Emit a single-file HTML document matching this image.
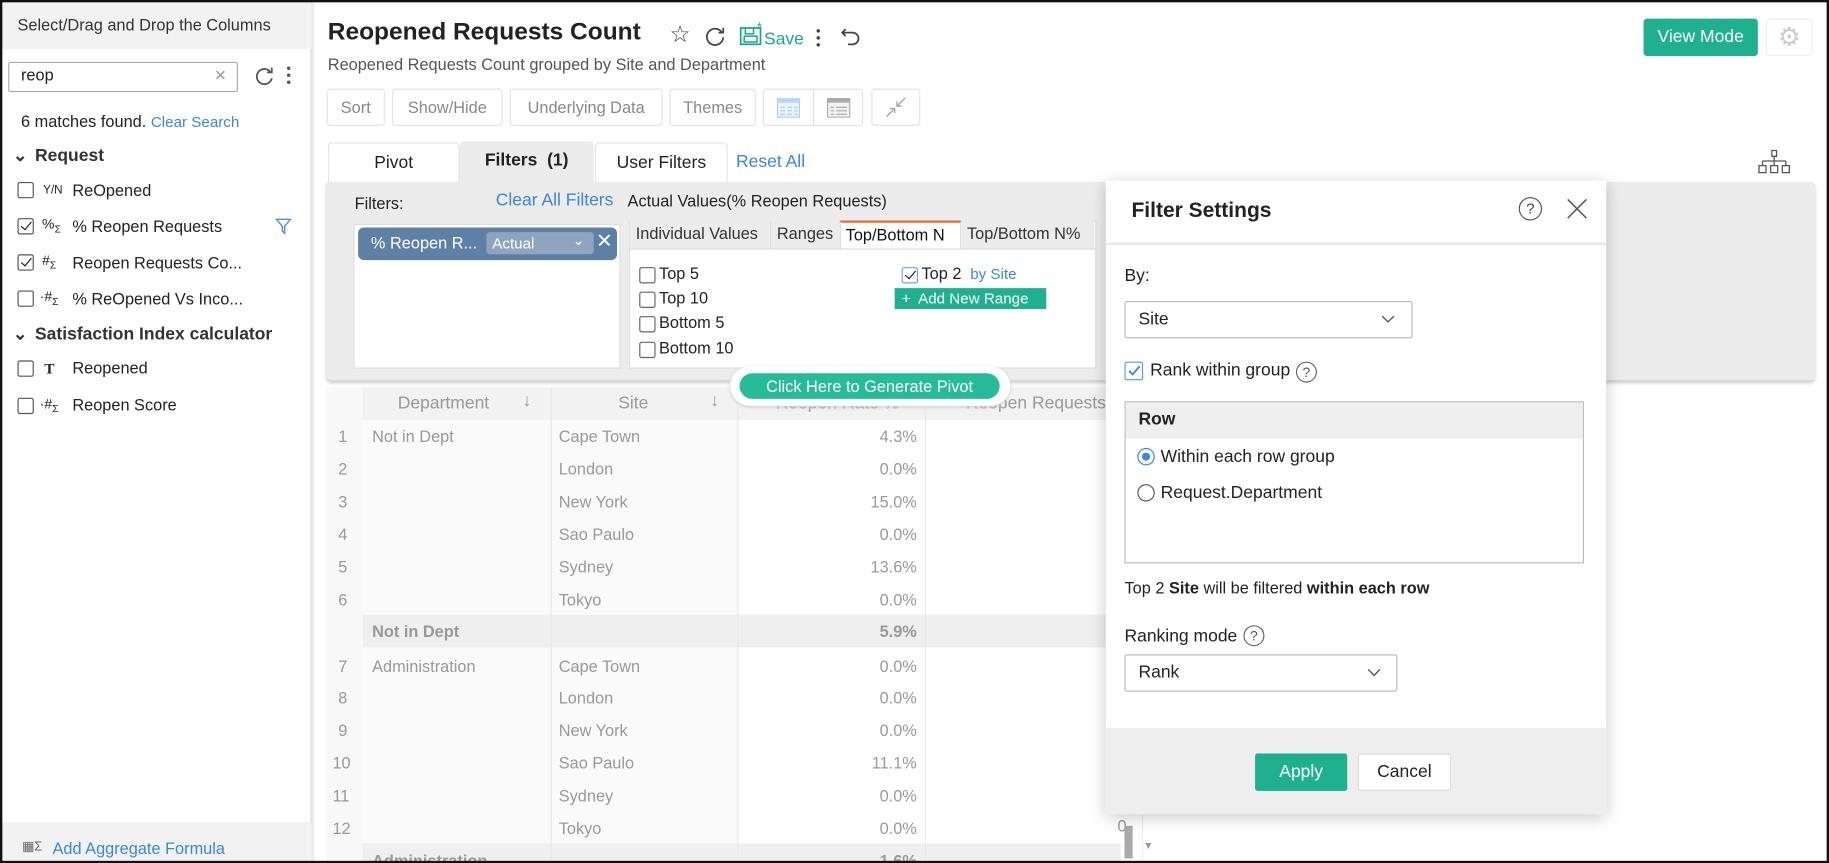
<!DOCTYPE html>
<html><head><meta charset="utf-8"><style>
*{box-sizing:border-box;margin:0;padding:0}
html,body{width:1829px;height:863px;overflow:hidden;background:#fff}
#w{position:absolute;left:0;top:0;width:1568px;height:740px;transform:scale(1.16645);transform-origin:0 0;font-family:"Liberation Sans",sans-serif;font-size:14px;color:#222;overflow:hidden}
.a{position:absolute}
.blue{color:#3a86e0}
.cb{position:absolute;width:14px;height:14px;border:1px solid #555;border-radius:2px;background:#fff}
.cb.on::after{content:"";position:absolute;left:4px;top:0px;width:4px;height:8px;border:solid #222;border-width:0 1.5px 1.5px 0;transform:rotate(40deg)}
.btn{position:absolute;top:76px;height:32px;border:1px solid #e3e3e3;border-radius:3px;color:#888;font-size:14px;line-height:30px;text-align:center}
.row{position:absolute;left:0;width:680px;height:28px;font-size:14px;color:#999;line-height:28px}
.row span{position:absolute}
.fld{font-size:14px}
</style></head><body><div id="w">
<!-- left panel -->
<div class="a" style="left:0;top:0;width:267px;height:740px;background:#fff;border-right:1px solid #ddd;box-shadow:2px 0 3px #e4e4e4"></div>
<div class="a" style="left:0;top:0;width:267px;height:42px;background:#f2f2f2"></div>
<div class="a" style="left:15px;top:13px;font-size:14px;color:#333">Select/Drag and Drop the Columns</div>
<div class="a" style="left:7px;top:53px;width:197px;height:26px;border:1px solid #aaa;border-radius:2px"></div>
<div class="a" style="left:18px;top:56px;font-size:14px">reop</div>
<div class="a" style="left:184px;top:55px;font-size:17px;color:#999">×</div>
<svg class="a" style="left:218px;top:57px" width="18" height="18" viewBox="0 0 18 18"><path d="M14 5A6.5 6.5 0 1 0 15 10" fill="none" stroke="#555" stroke-width="1.5"/><path d="M11 5h4V1" fill="none" stroke="#555" stroke-width="1.5"/></svg>
<div class="a" style="left:246px;top:57px;width:3px;height:3px;background:#555;border-radius:2px;box-shadow:0 6px #555,0 12px #555"></div>
<div class="a" style="left:18px;top:96px;font-size:14px">6 matches found. <span class="blue" style="font-size:13px">Clear Search</span></div>
<div class="a" style="left:11px;top:124px;font-size:15px;font-weight:bold;color:#333">⌄</div>
<div class="a" style="left:30px;top:125px;font-size:15px;font-weight:bold;color:#333">Request</div>
<div class="cb" style="left:15px;top:156px"></div><div class="a" style="left:37px;top:158px;font-size:10px">Y/N</div><div class="a fld" style="left:62px;top:155px">ReOpened</div>
<div class="cb on" style="left:15px;top:187px"></div><div class="a" style="left:36px;top:185px;font-size:12px">%<sub style="font-size:9px">Σ</sub></div><div class="a fld" style="left:62px;top:186px">% Reopen Requests</div>
<svg class="a" style="left:236px;top:187px" width="14" height="14" viewBox="0 0 14 14"><path d="M1 1h12L8 7v6L6 11V7Z" fill="none" stroke="#4a8fe0" stroke-width="1.2"/></svg>
<div class="cb on" style="left:15px;top:218px"></div><div class="a" style="left:36px;top:216px;font-size:12px">#<sub style="font-size:9px">Σ</sub></div><div class="a fld" style="left:62px;top:217px">Reopen Requests Co...</div>
<div class="cb" style="left:15px;top:249px"></div><div class="a" style="left:34px;top:247px;font-size:12px">·#<sub style="font-size:9px">Σ</sub></div><div class="a fld" style="left:62px;top:248px">% ReOpened Vs Inco...</div>
<div class="a" style="left:11px;top:277px;font-size:15px;font-weight:bold;color:#333">⌄</div>
<div class="a" style="left:30px;top:278px;font-size:15px;font-weight:bold;color:#333">Satisfaction Index calculator</div>
<div class="cb" style="left:15px;top:309px"></div><div class="a" style="left:38px;top:308px;font-size:13px;font-weight:bold;font-family:'Liberation Serif',serif">T</div><div class="a fld" style="left:62px;top:307px">Reopened</div>
<div class="cb" style="left:15px;top:341px"></div><div class="a" style="left:34px;top:339px;font-size:12px">·#<sub style="font-size:9px">Σ</sub></div><div class="a fld" style="left:62px;top:339px">Reopen Score</div>
<div class="a" style="left:0;top:705px;width:267px;height:35px;background:#f2f2f2"></div>
<div class="a" style="left:19px;top:719px;font-size:11px;color:#666">▦Σ</div>
<div class="a blue" style="left:45px;top:719px;font-size:14px">Add Aggregate Formula</div>

<!-- header -->
<div class="a" style="left:281px;top:16px;font-size:21px;font-weight:bold;color:#222">Reopened Requests Count</div>
<div class="a" style="left:574px;top:17px;font-size:20px;color:#444">☆</div>
<svg class="a" style="left:604px;top:22px" width="18" height="18" viewBox="0 0 18 18"><path d="M15 6A7 7 0 1 0 16 10" fill="none" stroke="#444" stroke-width="1.5"/><path d="M12 6h4V2" fill="none" stroke="#444" stroke-width="1.5"/></svg>
<svg class="a" style="left:634px;top:18px" width="22" height="22" viewBox="0 0 22 22"><rect x="1" y="6" width="17" height="14" fill="none" stroke="#1aa88a" stroke-width="1.5"/><rect x="4" y="13" width="11" height="5" fill="none" stroke="#1aa88a" stroke-width="1.3"/><path d="M5 6v5h7V6" fill="none" stroke="#1aa88a" stroke-width="1.3"/><text x="15" y="9" font-size="11" fill="#1aa88a" font-family="Liberation Sans">*</text></svg>
<div class="a" style="left:655px;top:25px;font-size:15px;color:#1aa88a">Save</div>
<div class="a" style="left:700px;top:25px;width:3px;height:3px;background:#444;border-radius:2px;box-shadow:0 6px #444,0 12px #444"></div>
<svg class="a" style="left:721px;top:22px" width="18" height="18" viewBox="0 0 18 18"><path d="M4 3L1 6l3 3M1 6h9a5 5 0 0 1 0 10H6" fill="none" stroke="#444" stroke-width="1.5"/></svg>
<div class="a" style="left:281px;top:47px;font-size:14px;color:#555">Reopened Requests Count grouped by Site and Department</div>
<div class="btn" style="left:280px;width:50px">Sort</div>
<div class="btn" style="left:336px;width:95px">Show/Hide</div>
<div class="btn" style="left:437px;width:131px">Underlying Data</div>
<div class="btn" style="left:574px;width:74px">Themes</div>
<div class="btn" style="left:654px;width:86px"></div>
<div class="a" style="left:697px;top:77px;width:1px;height:30px;background:#e3e3e3"></div>
<svg class="a" style="left:666px;top:84px" width="20" height="17"><rect x="0.5" y="0.5" width="19" height="16" fill="#eaf3fb" stroke="#a9cdee"/><rect x="0" y="0" width="20" height="4" fill="#b7d7f2"/><path d="M3 8h4M9 8h4M15 8h3M3 11h4M9 11h4M15 11h3M3 14h4M9 14h4M15 14h3" stroke="#a9cdee"/></svg>
<svg class="a" style="left:709px;top:84px" width="20" height="17"><rect x="0.5" y="0.5" width="19" height="16" fill="#f3f3f3" stroke="#aaa"/><rect x="0" y="0" width="20" height="4" fill="#aaa"/><path d="M3 8h3M8 8h9M3 11h3M8 11h9M3 14h3M8 14h9" stroke="#aaa"/></svg>
<div class="btn" style="left:747px;width:42px"></div>
<svg class="a" style="left:758px;top:82px" width="20" height="20"><path d="M2 18L9 11M5 11h4v4M18 2l-7 7M11 5v4h4" fill="none" stroke="#aaa" stroke-width="1.3"/></svg>
<div class="a" style="left:1409px;top:16px;width:98px;height:32px;background:#1fb08f;border-radius:3px;color:#fff;font-size:15px;line-height:32px;text-align:center">View Mode</div>
<div class="a" style="left:1514px;top:16px;width:40px;height:32px;border:1px solid #eee;border-radius:3px;color:#ccc;font-size:22px;line-height:30px;text-align:center">⚙</div>

<!-- tabs -->
<div class="a" style="left:281px;top:122px;width:113px;height:36px;border:1px solid #e2e2e2;border-bottom:none;border-radius:4px 4px 0 0;background:#fff;text-align:center;line-height:34px;font-size:15px">Pivot</div>
<div class="a" style="left:394px;top:121px;width:115px;height:37px;background:#ececec;border-radius:4px 4px 0 0;text-align:center;line-height:34px;font-size:15px;font-weight:bold">Filters&nbsp; (1)</div>
<div class="a" style="left:510px;top:122px;width:114px;height:36px;border:1px solid #e2e2e2;border-bottom:none;border-radius:4px 4px 0 0;background:#fff;text-align:center;line-height:34px;font-size:15px">User Filters</div>
<div class="a blue" style="left:631px;top:130px;font-size:15px">Reset All</div>
<svg class="a" style="left:1506px;top:128px" width="30" height="22"><path d="M13 1h4v5h-4zM15 6v4M5 10h20M5 10v4M15 10v4M25 10v4M2 14h6v6H2zM12 14h6v6h-6zM22 14h6v6h-6z" fill="none" stroke="#555" stroke-width="1.1"/></svg>

<!-- filter panel -->
<div class="a" style="left:280px;top:156px;width:1276px;height:170px;background:#ececec;border-radius:0 4px 4px 4px;box-shadow:0 2px 3px #ccc"></div>
<div class="a" style="left:304px;top:166px;font-size:14px">Filters:</div>
<div class="a blue" style="left:425px;top:163px;font-size:15px">Clear All Filters</div>
<div class="a" style="left:538px;top:164px;font-size:14px">Actual Values(% Reopen Requests)</div>
<div class="a" style="left:303px;top:192px;width:229px;height:124px;background:#fff;border:1px solid #ddd"></div>
<div class="a" style="left:307px;top:195px;width:222px;height:28px;background:#5f80a5;border-radius:5px"></div>
<div class="a" style="left:318px;top:200px;color:#fff;font-size:14px">% Reopen R...</div>
<div class="a" style="left:417px;top:199px;width:92px;height:19px;background:#8fa4bf;border-radius:3px;color:#fff;font-size:13px;line-height:19px;padding-left:5px">Actual<span style="position:absolute;right:8px;top:-2px;font-size:12px">⌄</span></div>
<div class="a" style="left:511px;top:197px;color:#fff;font-size:17px">✕</div>
<div class="a" style="left:539px;top:189px;width:401px;height:127px;background:#fff;border:1px solid #ddd"></div>
<div class="a" style="left:540px;top:189px;width:398px;height:24px;background:#ececec"></div>
<div class="a" style="left:545px;top:192px;font-size:14px;color:#333">Individual Values</div>
<div class="a" style="left:660px;top:190px;width:1px;height:23px;background:#ddd"></div>
<div class="a" style="left:666px;top:192px;font-size:14px;color:#333">Ranges</div>
<div class="a" style="left:720px;top:189px;width:104px;height:25px;background:#fff;border-top:2px solid #e5703a;border-left:1px solid #ddd;border-right:1px solid #ddd"></div>
<div class="a" style="left:725px;top:193px;font-size:14px;color:#111">Top/Bottom N</div>
<div class="a" style="left:829px;top:192px;font-size:14px;color:#333">Top/Bottom N%</div>
<div class="a" style="left:540px;top:213px;width:399px;height:1px;background:#ddd"></div>
<div class="cb" style="left:548px;top:229px;border-color:#666"></div><div class="a" style="left:565px;top:226px;font-size:14px">Top 5</div>
<div class="cb" style="left:548px;top:250px;border-color:#666"></div><div class="a" style="left:565px;top:247px;font-size:14px">Top 10</div>
<div class="cb" style="left:548px;top:271px;border-color:#666"></div><div class="a" style="left:565px;top:268px;font-size:14px">Bottom 5</div>
<div class="cb" style="left:548px;top:293px;border-color:#666"></div><div class="a" style="left:565px;top:290px;font-size:14px">Bottom 10</div>
<div class="cb on" style="left:773px;top:229px;border-color:#6ea7e8"></div><div class="a" style="left:790px;top:226px;font-size:14px">Top 2 <span class="blue" style="font-size:13px">&nbsp;by Site</span></div>
<div class="a" style="left:767px;top:247px;width:130px;height:18px;background:#1fb08f;color:#fff;font-size:13px;line-height:18px;padding-left:6px">+&nbsp; Add New Range</div>

<!-- table -->
<div class="a" style="left:280px;top:332px;width:700px;height:410px;background:#fff;border:1px solid #eee"></div>
<div class="a" style="left:311px;top:332px;width:650px;height:28px;background:#f2f2f2"></div>
<div class="a" style="left:280px;top:332px;width:31px;height:410px;background:#f8f8f8"></div>
<div class="a" style="left:311px;top:360px;width:321px;height:380px;background:#fafafa"></div>
<div class="a" style="left:311px;top:527px;width:650px;height:28px;background:#efefef"></div>
<div class="a" style="left:311px;top:723px;width:650px;height:28px;background:#efefef"></div>
<div class="a" style="left:472px;top:332px;width:1px;height:410px;background:#e8e8e8"></div>
<div class="a" style="left:632px;top:332px;width:1px;height:410px;background:#e8e8e8"></div>
<div class="a" style="left:793px;top:332px;width:1px;height:410px;background:#e8e8e8"></div>
<div class="a" style="left:341px;top:337px;font-size:15px;color:#999">Department</div><div class="a" style="left:448px;top:335px;font-size:15px;color:#999">↓</div>
<div class="a" style="left:530px;top:337px;font-size:15px;color:#999">Site</div><div class="a" style="left:609px;top:335px;font-size:15px;color:#999">↓</div>
<div class="a" style="left:665px;top:337px;font-size:15px;color:#999">Reopen Rate %</div>
<div class="a" style="left:828px;top:337px;font-size:15px;color:#999">Reopen Requests</div>
<div style="position:absolute;left:280px;top:360px">
<div class="row" style="top:0"><span style="left:10px">1</span><span style="left:39px">Not in Dept</span><span style="left:199px">Cape Town</span><span style="right:174px">4.3%</span></div>
<div class="row" style="top:28px"><span style="left:10px">2</span><span style="left:199px">London</span><span style="right:174px">0.0%</span></div>
<div class="row" style="top:56px"><span style="left:10px">3</span><span style="left:199px">New York</span><span style="right:174px">15.0%</span></div>
<div class="row" style="top:84px"><span style="left:10px">4</span><span style="left:199px">Sao Paulo</span><span style="right:174px">0.0%</span></div>
<div class="row" style="top:112px"><span style="left:10px">5</span><span style="left:199px">Sydney</span><span style="right:174px">13.6%</span></div>
<div class="row" style="top:140px"><span style="left:10px">6</span><span style="left:199px">Tokyo</span><span style="right:174px">0.0%</span></div>
<div class="row" style="top:167px;font-weight:bold"><span style="left:39px">Not in Dept</span><span style="right:174px">5.9%</span></div>
<div class="row" style="top:197px"><span style="left:10px">7</span><span style="left:39px">Administration</span><span style="left:199px">Cape Town</span><span style="right:174px">0.0%</span></div>
<div class="row" style="top:224px"><span style="left:10px">8</span><span style="left:199px">London</span><span style="right:174px">0.0%</span></div>
<div class="row" style="top:252px"><span style="left:10px">9</span><span style="left:199px">New York</span><span style="right:174px">0.0%</span></div>
<div class="row" style="top:280px"><span style="left:5px">10</span><span style="left:199px">Sao Paulo</span><span style="right:174px">11.1%</span></div>
<div class="row" style="top:308px"><span style="left:5px">11</span><span style="left:199px">Sydney</span><span style="right:174px">0.0%</span></div>
<div class="row" style="top:336px"><span style="left:5px">12</span><span style="left:199px">Tokyo</span><span style="right:174px">0.0%</span></div>
<div class="row" style="top:364px;font-weight:bold"><span style="left:39px">Administration</span><span style="right:174px">1.6%</span></div>
</div>
<div class="a" style="left:958px;top:700px;font-size:14px;color:#999">0</div>
<div class="a" style="left:964px;top:708px;width:7px;height:28px;background:#aaa"></div>
<div class="a" style="left:980px;top:720px;font-size:9px;color:#999">▼</div>

<!-- generate pivot -->
<div class="a" style="left:626px;top:314px;width:240px;height:34px;background:#fff;border-radius:17px;box-shadow:0 1px 3px #ccc"></div>
<div class="a" style="left:634px;top:320px;width:223px;height:22px;background:#26bc99;border-radius:11px;color:#fff;font-size:14px;line-height:22px;text-align:center">Click Here to Generate Pivot</div>

<!-- dialog -->
<div class="a" style="left:948px;top:155px;width:429px;height:543px;background:#fff;box-shadow:0 3px 14px rgba(0,0,0,.22)"></div>
<div class="a" style="left:970px;top:170px;font-size:18px;font-weight:bold">Filter Settings</div>
<div class="a" style="left:1302px;top:169px;width:20px;height:20px;border:1px solid #555;border-radius:50%;font-size:13px;line-height:18px;text-align:center;color:#444">?</div>
<svg class="a" style="left:1343px;top:170px" width="18" height="18"><path d="M1 1l16 16M17 1L1 17" stroke="#555" stroke-width="1.3"/></svg>
<div class="a" style="left:948px;top:208px;width:429px;height:2px;background:#e8e8e8"></div>
<div class="a" style="left:964px;top:228px;font-size:15px">By:</div>
<div class="a" style="left:964px;top:258px;width:247px;height:32px;border:1px solid #bbb;border-radius:2px"></div>
<div class="a" style="left:976px;top:265px;font-size:15px">Site</div>
<svg class="a" style="left:1184px;top:270px" width="12" height="8"><path d="M1 1l5 5 5-5" fill="none" stroke="#555" stroke-width="1.2"/></svg>
<div class="a" style="left:964px;top:310px;width:16px;height:16px;border:1px solid #5a9ce8;border-radius:2px"></div>
<svg class="a" style="left:966px;top:312px" width="12" height="12"><path d="M2 6l3 3 6-7" fill="none" stroke="#3a86e0" stroke-width="1.6"/></svg>
<div class="a" style="left:986px;top:309px;font-size:15px">Rank within group</div>
<div class="a" style="left:1111px;top:310px;width:18px;height:18px;border:1px solid #666;border-radius:50%;font-size:12px;line-height:16px;text-align:center;color:#555">?</div>
<div class="a" style="left:964px;top:344px;width:394px;height:139px;border:1px solid #bbb"></div>
<div class="a" style="left:965px;top:345px;width:392px;height:31px;background:#eee"></div>
<div class="a" style="left:976px;top:351px;font-size:15px;font-weight:bold">Row</div>
<div class="a" style="left:975px;top:384px;width:15px;height:15px;border:1px solid #3a86e0;border-radius:50%"></div>
<div class="a" style="left:979px;top:388px;width:7px;height:7px;background:#3a86e0;border-radius:50%"></div>
<div class="a" style="left:995px;top:383px;font-size:15px">Within each row group</div>
<div class="a" style="left:975px;top:415px;width:15px;height:15px;border:1px solid #555;border-radius:50%"></div>
<div class="a" style="left:995px;top:414px;font-size:15px">Request.Department</div>
<div class="a" style="left:964px;top:496px;font-size:14px">Top 2 <b>Site</b> will be filtered <b>within each row</b></div>
<div class="a" style="left:964px;top:537px;font-size:15px">Ranking mode</div>
<div class="a" style="left:1066px;top:536px;width:18px;height:18px;border:1px solid #666;border-radius:50%;font-size:12px;line-height:16px;text-align:center;color:#555">?</div>
<div class="a" style="left:964px;top:561px;width:234px;height:32px;border:1px solid #bbb;border-radius:2px"></div>
<div class="a" style="left:976px;top:568px;font-size:15px">Rank</div>
<svg class="a" style="left:1172px;top:573px" width="12" height="8"><path d="M1 1l5 5 5-5" fill="none" stroke="#555" stroke-width="1.2"/></svg>
<div class="a" style="left:948px;top:624px;width:429px;height:74px;background:#eee"></div>
<div class="a" style="left:1076px;top:646px;width:79px;height:32px;background:#1fb08f;border-radius:2px;color:#fff;font-size:15px;line-height:32px;text-align:center">Apply</div>
<div class="a" style="left:1164px;top:646px;width:80px;height:32px;background:#fff;border:1px solid #ddd;border-radius:2px;font-size:15px;line-height:30px;text-align:center">Cancel</div>

<!-- outer frame -->
<div class="a" style="left:0;top:0;width:1568px;height:2px;background:#111"></div>
<div class="a" style="left:0;top:738px;width:1568px;height:2px;background:#111"></div>
<div class="a" style="left:0;top:0;width:2px;height:740px;background:#111"></div>
<div class="a" style="left:1566px;top:0;width:2px;height:740px;background:#111"></div>
</div></body></html>
